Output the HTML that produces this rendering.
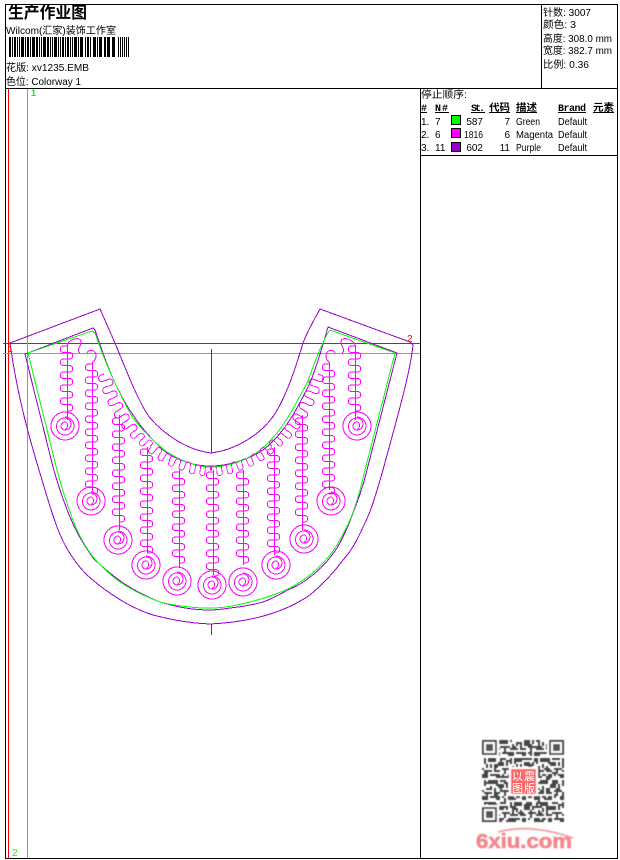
<!DOCTYPE html>
<html><head><meta charset="utf-8"><style>
html,body{margin:0;padding:0;background:#fff;width:620px;height:860px;overflow:hidden}
svg{display:block}
text{font-family:"Liberation Sans","WenQuanYi Zen Hei","Noto Sans CJK SC",sans-serif;font-size:10px;fill:#000}
.b{font-weight:bold}
</style></head><body>
<svg width="620" height="860" viewBox="0 0 620 860" xmlns="http://www.w3.org/2000/svg">
<defs>
<path id="c" d="M0,0H-4A3.3,3.3 0 0 0 -4,6.5H3A3.3,3.3 0 0 1 3,13H0" fill="none" stroke="#f0f"/>
<g id="c5"><use href="#c"/><use href="#c" y="13"/><use href="#c" y="26"/><use href="#c" y="39"/><use href="#c" y="52"/></g>
<g id="c7"><use href="#c5"/><use href="#c" y="65"/><use href="#c" y="78"/></g>
<g id="c8"><use href="#c7"/><use href="#c" y="91"/></g>
<g id="c10"><use href="#c8"/><use href="#c" y="104"/><use href="#c" y="117"/></g>
<path id="s" fill="none" stroke="#f0f" d="M0,-14A14,14 0 0 1 0,14A14,14 0 0 1 0,-14M0,-9A9,9 0 0 1 0,9A8.5,8.5 0 0 1 0,-8A6,6 0 0 1 0,4A4,4 0 0 1 0,-4A2.5,3.5 0 0 1 0,3"/>
<g id="scallop">
<path fill="none" stroke="#f0f" d="M67,345C70,338 82,336 81,343C80,348 76,350 80,353M87,353C88,349 96,349 96,356C96,360 93,362 92,363"/>
<use href="#c" transform="translate(104,374) rotate(-20)"/>
<use href="#c" transform="translate(108,386) rotate(-22)"/>
<use href="#c" transform="translate(113,398) rotate(-25)"/>
<use href="#c" transform="translate(119,410) rotate(-30)"/>
<use href="#c" transform="translate(126,421) rotate(-35)"/>
<use href="#c" transform="translate(134,431) scale(.9) rotate(-40)"/>
<use href="#c" transform="translate(142,439) scale(.85) rotate(-48)"/>
<use href="#c" transform="translate(151,447) scale(.85) rotate(-52)"/>
<use href="#c" transform="translate(160,454) scale(.85) rotate(-58)"/>
<use href="#c" transform="translate(170,460) scale(.8) rotate(-65)"/>
<use href="#c" transform="translate(180,464) scale(.8) rotate(-72)"/>
<use href="#c" transform="translate(190,468) scale(.8) rotate(-80)"/>
<use href="#c" transform="translate(200,470) scale(.8) rotate(-86)"/>
</g>
<pattern id="q1" width="26" height="22" patternUnits="userSpaceOnUse"><path fill="#444" d="M0 0h6v2H0zM10 0h2v4h-2zM16 0h8v2h-8zM2 4h4v4H2zM8 4h2v2H8zM14 4h6v4h-6zM22 4h4v2h-4zM0 10h2v4H0zM6 10h6v2H6zM16 10h2v6h-2zM20 10h6v4h-6zM4 14h6v4H4zM12 14h2v4h-2zM22 16h2v4h-2zM0 18h2v4H0zM8 20h8v2H8zM18 18h2v2h-2z"/></pattern>
<pattern id="q2" width="34" height="30" patternUnits="userSpaceOnUse"><path fill="#444" d="M2 2h2v2H2zM8 2h6v2H8zM20 0h2v6h-2zM28 2h4v2h-4zM4 8h2v6H4zM12 8h4v2h-4zM24 8h2v4h-2zM30 10h4v2h-4zM10 14h2v2h-2zM18 14h4v4h-4zM0 18h6v2H0zM28 18h2v6h-2zM8 22h4v2H8zM14 24h8v2h-8zM2 26h4v4H2zM24 26h8v2h-8z"/></pattern>
<filter id="bl" x="-5%" y="-5%" width="110%" height="110%"><feGaussianBlur stdDeviation="0.5"/></filter>
<filter id="bl2" x="-5%" y="-20%" width="110%" height="140%"><feGaussianBlur stdDeviation="0.4"/></filter>
</defs>

<rect width="620" height="860" fill="#fff"/>

<g shape-rendering="crispEdges" fill="none">
<rect x="5.5" y="4.5" width="612" height="854" stroke="#000"/>
<path stroke="#000" d="M5,88.5H618M541.5,4V88M420.5,88V858M420,155.5H618"/>
<path stroke="#f00" d="M8.5,89V858M3,343.5H420"/>
<path stroke="#0f0" d="M27.5,89V858M3,353.5H420"/>
</g>

<!-- garment -->
<g fill="none" shape-rendering="crispEdges">
<path stroke="#90c" d="M10,343L100,309L115,343C128,375 140,405 150,418C165,435 187,450 211,453C235,450 258,436 272,418C285,400 295,370 303,343C308,330 314,320 320,309L410,342L413,345C410,375 395,425 383,470C377,490 372,510 363,527C355,545 350,552 343,560C332,575 322,585 310,595C295,605 283,610 267,615C250,620 230,623 210,624C185,623 165,618 153,615C133,609 108,594 87,575C70,558 62,540 57,527C50,508 45,490 39,470C30,440 17,395 10,343Z"/>
<path stroke="#90c" d="M25,354L28,353L93,328L95,330C100,345 108,368 115,383C122,398 128,408 133,415C143,430 155,443 167,453C180,461 195,466 210,466C228,466 248,460 263,450C275,441 285,428 293,415C300,403 305,393 310,383C317,365 323,345 328,327L397,353L367,470C363,487 358,500 353,513C348,527 343,538 337,548C329,560 320,570 310,577C303,583 297,586 290,589C280,594 272,599 263,602C252,605 241,607 230,608C223,609 217,610 210,610C193,610 176,607 160,602C147,597 134,590 123,583C112,575 102,567 93,558C83,544 76,532 70,517C63,500 58,485 53,467Z"/>
<path stroke="#0f0" d="M28,353L92,331L95,333C100,348 108,368 115,383C121,396 127,408 133,418C143,431 155,443 167,452C180,460 195,467 210,467C226,467 241,462 253,455C263,449 270,441 277,433C288,419 298,400 307,383C313,368 318,352 323,343C325,338 327,334 330,330L395,353L365,470C361,488 356,505 350,520C344,533 338,545 330,555C318,570 305,580 290,588C273,596 256,601 237,605C228,607 219,608 210,608C203,608 197,608 190,607C180,606 170,605 160,602C146,597 132,590 120,582C110,575 101,566 93,557C84,545 76,530 70,512C65,498 61,485 57,470Z"/>
<path stroke="#90c" d="M211.5,349V453M211.5,624V635"/>
<g stroke="#f0f">
<path d="M67.5,345V420M92.5,362V492M119.5,415V530M147.5,447V553M179.5,470V568M213.5,470V575M243.5,470V565M274.5,447V555M302.5,415V530M329.5,362V490M355.5,345V420"/>
</g>
<use href="#c5" x="67" y="346"/>
<use href="#c10" x="92" y="364"/>
<use href="#c8" x="119" y="418"/>
<use href="#c8" x="147" y="449"/>
<use href="#c7" x="179" y="472"/>
<use href="#c8" x="213" y="472"/>
<use href="#c7" x="243" y="472"/>
<use href="#c8" x="274" y="449"/>
<use href="#c8" x="302" y="418"/>
<use href="#c10" x="329" y="364"/>
<use href="#c5" x="355" y="346"/>
<use href="#s" x="65" y="426"/>
<use href="#s" x="91" y="501"/>
<use href="#s" x="118" y="540"/>
<use href="#s" x="146" y="565"/>
<use href="#s" x="177" y="581"/>
<use href="#s" x="212" y="585"/>
<use href="#s" x="243" y="582"/>
<use href="#s" x="276" y="565"/>
<use href="#s" x="304" y="539"/>
<use href="#s" x="331" y="501"/>
<use href="#s" x="357" y="426"/>
<use href="#scallop"/>
<use href="#scallop" transform="translate(422,0) scale(-1,1)"/>
</g>

<!-- guide labels -->
<text x="31" y="96" class="b" style="fill:#0f0;font-size:9px">1</text>
<text x="12" y="856" style="fill:#0f0;font-size:10px">2</text>
<text x="8" y="352" style="fill:#f00;font-size:9px">1</text>
<text x="407" y="342" style="fill:#f00;font-size:10px">2</text>

<!-- header left -->
<text x="8" y="18" class="b" style="font-size:16px" textLength="79" lengthAdjust="spacingAndGlyphs">生产作业图</text>
<text x="6" y="34" textLength="110" lengthAdjust="spacingAndGlyphs">Wilcom(汇家)装饰工作室</text>
<path fill="#000" shape-rendering="crispEdges" d="M9 37h2v20H9zM12 37h1v20h-1zM14 37h2v20h-2zM17 37h1v20h-1zM19 37h1v20h-1zM21 37h3v20h-3zM25 37h1v20h-1zM27 37h2v20h-2zM30 37h1v20h-1zM32 37h3v20h-3zM36 37h2v20h-2zM39 37h1v20h-1zM41 37h1v20h-1zM43 37h3v20h-3zM47 37h2v20h-2zM50 37h1v20h-1zM52 37h1v20h-1zM54 37h3v20h-3zM58 37h1v20h-1zM60 37h1v20h-1zM62 37h2v20h-2zM65 37h1v20h-1zM67 37h2v20h-2zM70 37h1v20h-1zM72 37h1v20h-1zM74 37h3v20h-3zM78 37h1v20h-1zM80 37h3v20h-3zM85 37h1v20h-1zM87 37h2v20h-2zM90 37h1v20h-1zM93 37h3v20h-3zM97 37h1v20h-1zM99 37h3v20h-3zM104 37h2v20h-2zM107 37h3v20h-3zM112 37h3v20h-3zM118 37h1v20h-1zM120 37h1v20h-1zM122 37h1v20h-1zM124 37h1v20h-1zM126 37h1v20h-1zM128 37h1v20h-1z"/>
<text x="6" y="71" textLength="83" lengthAdjust="spacingAndGlyphs">花版: xv1235.EMB</text>
<text x="6" y="85" textLength="75" lengthAdjust="spacingAndGlyphs">色位:  Colorway 1</text>

<!-- header right -->
<text x="543" y="16" textLength="48" lengthAdjust="spacingAndGlyphs">针数: 3007</text>
<text x="543" y="28" textLength="33" lengthAdjust="spacingAndGlyphs">颜色: 3</text>
<text x="543" y="42" textLength="69" lengthAdjust="spacingAndGlyphs">高度: 308.0 mm</text>
<text x="543" y="54" textLength="69" lengthAdjust="spacingAndGlyphs">宽度: 382.7 mm</text>
<text x="543" y="68" textLength="46" lengthAdjust="spacingAndGlyphs">比例: 0.36</text>

<!-- table -->
<text x="421" y="98" textLength="46" lengthAdjust="spacingAndGlyphs">停止顺序:</text>
<text x="421" y="111" class="b" style="font-family:'Liberation Mono','WenQuanYi Zen Hei',monospace">#</text>
<text x="435" y="111" class="b" style="font-family:'Liberation Mono','WenQuanYi Zen Hei',monospace" textLength="13">N#</text>
<text x="471" y="111" class="b" style="font-family:'Liberation Mono','WenQuanYi Zen Hei',monospace" textLength="14">St.</text>
<text x="489" y="111" class="b" textLength="21" lengthAdjust="spacingAndGlyphs">代码</text>
<text x="516" y="111" class="b" textLength="21" lengthAdjust="spacingAndGlyphs">描述</text>
<text x="558" y="111" class="b" style="font-family:'Liberation Mono',monospace" textLength="28">Brand</text>
<text x="593" y="111" class="b" textLength="21" lengthAdjust="spacingAndGlyphs">元素</text>
<path shape-rendering="crispEdges" stroke="#000" d="M421,112.5h6M435,112.5h14M471,112.5h14M489,112.5h21M516,112.5h21M558,112.5h28M593,112.5h21"/>

<g shape-rendering="crispEdges" stroke="#000">
<rect x="451.5" y="115.5" width="9" height="9" fill="#0f0"/>
<rect x="451.5" y="128.5" width="9" height="9" fill="#f0f"/>
<rect x="451.5" y="142.5" width="9" height="9" fill="#90c"/>
</g>
<text x="421" y="125">1.</text><text x="435" y="125">7</text><text x="483" y="125" text-anchor="end">587</text><text x="510" y="125" text-anchor="end">7</text><text x="516" y="125" textLength="24" lengthAdjust="spacingAndGlyphs">Green</text><text x="558" y="125" textLength="29" lengthAdjust="spacingAndGlyphs">Default</text>
<text x="421" y="138">2.</text><text x="435" y="138">6</text><text x="464" y="138" textLength="19" lengthAdjust="spacingAndGlyphs">1816</text><text x="510" y="138" text-anchor="end">6</text><text x="516" y="138" textLength="37" lengthAdjust="spacingAndGlyphs">Magenta</text><text x="558" y="138" textLength="29" lengthAdjust="spacingAndGlyphs">Default</text>
<text x="421" y="151">3.</text><text x="435" y="151">11</text><text x="483" y="151" text-anchor="end">602</text><text x="510" y="151" text-anchor="end">11</text><text x="516" y="151" textLength="25" lengthAdjust="spacingAndGlyphs">Purple</text><text x="558" y="151" textLength="29" lengthAdjust="spacingAndGlyphs">Default</text>

<!-- QR -->
<g filter="url(#bl)">
<rect x="482" y="740" width="82" height="82" fill="url(#q1)"/>
<rect x="482" y="740" width="82" height="82" fill="url(#q2)"/>
<path fill="#fff" d="M482 740h17v17h-17zM547 740h17v17h-17zM482 805h17v17h-17z"/>
<path fill="#444" fill-rule="evenodd" d="M482 740h15v15h-15zM484 742v11h11v-11zM549 740h15v15h-15zM551 742v11h11v-11zM482 807h15v15h-15zM484 809v11h11v-11z"/>
<path fill="#555" d="M486 744h7v7h-7zM553 744h7v7h-7zM486 811h7v7h-7z"/>
<rect x="509" y="767" width="29" height="29" fill="#fff"/>
<rect x="511" y="769" width="25" height="25" fill="#f66"/>
</g>
<text x="512" y="780" style="fill:#fff;font-size:11px">以</text><text x="524" y="780" style="fill:#fff;font-size:11px">震</text>
<text x="512" y="792" style="fill:#fff;font-size:11px">图</text><text x="524" y="792" style="fill:#fff;font-size:11px">版</text>
<g filter="url(#bl2)">
<path d="M498,832Q530,823 573,838" fill="none" stroke="#f6a6aa" stroke-width="2"/>
<text x="476" y="848" class="b" style="font-size:20px;fill:#f4868c;stroke:#f4868c;stroke-width:.6" textLength="96" lengthAdjust="spacingAndGlyphs">6xiu.com</text>
</g>
</svg>
</body></html>
